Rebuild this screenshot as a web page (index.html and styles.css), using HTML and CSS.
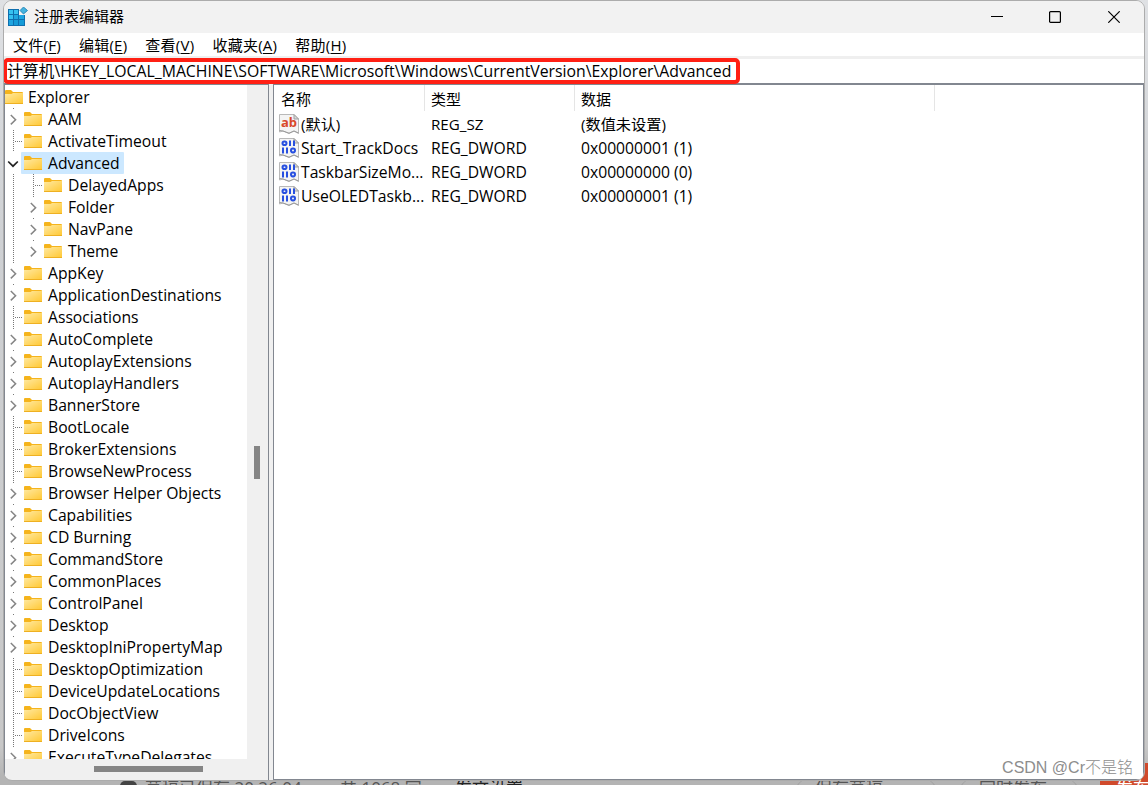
FILE: index.html
```
<!DOCTYPE html>
<html lang="zh-CN">
<head>
  <meta charset="UTF-8">
  <meta name="viewport" content="width=device-width, initial-scale=1.0">
  <title>注册表编辑器</title>
  <link rel="stylesheet" href="styles.css">
</head>
<body>

  <svg width="0" height="0" class="defs">
    <defs>
      <linearGradient id="folderFill" x1="0" y1="0" x2="1" y2="1">
        <stop offset="0" stop-color="#ffe9a2" />
        <stop offset="1" stop-color="#ffc937" />
      </linearGradient>
      <symbol id="folder" viewBox="0 0 18 14">
        <path d="M0 1.2Q0 0 1 0H6L8 2H17Q18 2 18 3V13H0Z" fill="#f5b41c" />
        <path d="M0 4H6.5L8 3H18V13H0Z" fill="url(#folderFill)" />
        <path d="M0 13.5H18" stroke="#eeb022" />
      </symbol>
      <symbol id="page" viewBox="0 0 20 20">
        <path d="M.5 .5H15L19.5 5V19.5L15 17L10 19.5L4 17L.5 18Z" fill="#f4f4f4" stroke="#b9b9b9" />
        <path d="M15 .5V5H19.5Z" fill="#d9d9d9" stroke="#a0a0a0" />
        <path d="M.5 16.5L4 17L10 19.2L15 17L19.5 19" fill="none" stroke="#999" />
      </symbol>
      <symbol id="binary" viewBox="0 0 20 20">
        <use href="#page" />
        <g fill="none" stroke="#2850e0" stroke-width="2">
          <rect x="3.5" y="3.5" width="4" height="3.6" rx="1.8" />
          <path d="M11 2.5V8M15 2.5V8M4 9.5V15.5M8 9.5V15.5" />
          <rect x="12" y="10.6" width="4" height="3.8" rx="1.8" />
        </g>
      </symbol>
    </defs>
  </svg>

  <div class="behind">
    <span class="save-dot"></span>
    <span class="saved">草稿已保存 20:26:04</span>
    <span class="count">共 1068 字</span>
    <span class="settings">发文设置</span>
    <span class="pill draft">保存草稿</span>
    <span class="pill timer">定时发布</span>
    <span class="publish">发布</span>
  </div>
  <div class="publish-edge"></div>

  <div class="window">
    <header class="titlebar">
      <svg class="app-icon" width="20" height="20" viewBox="0 0 20 20">
        <path d="M0 2H11V8H17V19H0Z" fill="#0f6fae" />
        <g fill="#35c1f1">
          <path d="M1 3H5V7H1ZM6 3H10V7H6ZM1 8H5V12H1Z" />
          <path d="M6 8H10V12H6ZM11 8H16V12H11ZM1 13H5V18H1Z" fill="#1fa5e0" />
          <path d="M6 13H10V18H6ZM11 13H16V18H11Z" fill="#149bd7" />
        </g>
        <path d="M15.5 0L19.5 3.5L15.5 7L12 3.5Z" fill="#45b3df" stroke="#1779ad" stroke-width=".8" />
      </svg>
      <h1>注册表编辑器</h1>
      <div class="controls">
        <svg width="12" height="12"><path d="M0 5.5H12" stroke="#000" /></svg>
        <svg width="12" height="12"><rect x=".6" y=".6" width="10.8" height="10.8" rx="1" fill="none" stroke="#000" stroke-width="1.2" /></svg>
        <svg width="12" height="12"><path d="M.3 .3L11.7 11.7M11.7 .3L.3 11.7" stroke="#000" stroke-width="1.2" /></svg>
      </div>
    </header>

    <nav class="menu">
      <span>文件(<u>F</u>)</span>
      <span>编辑(<u>E</u>)</span>
      <span>查看(<u>V</u>)</span>
      <span>收藏夹(<u>A</u>)</span>
      <span>帮助(<u>H</u>)</span>
    </nav>

    <div class="address">
      <div class="path">计算机\HKEY_LOCAL_MACHINE\SOFTWARE\Microsoft\Windows\CurrentVersion\Explorer\Advanced</div>
    </div>

    <main>
      <section class="tree-pane">
        <ul class="tree"></ul>
        <div class="scroll-y"><div class="thumb"></div></div>
        <div class="scroll-x"><div class="thumb"></div></div>
      </section>

      <section class="values">
        <div class="row head"><span>名称</span><span>类型</span><span>数据</span></div>
        <div class="row default">
          <span class="name">
            <svg width="20" height="20"><use href="#page" /><text x="2" y="13" class="ab">ab</text></svg>(默认)
          </span>
          <span>REG_SZ</span><span>(数值未设置)</span>
        </div>
        <div class="row">
          <span class="name"><svg width="20" height="20"><use href="#binary" /></svg>Start_TrackDocs</span>
          <span>REG_DWORD</span><span>0x00000001 (1)</span>
        </div>
        <div class="row">
          <span class="name"><svg width="20" height="20"><use href="#binary" /></svg>TaskbarSizeMo...</span>
          <span>REG_DWORD</span><span>0x00000000 (0)</span>
        </div>
        <div class="row">
          <span class="name"><svg width="20" height="20"><use href="#binary" /></svg>UseOLEDTaskb...</span>
          <span>REG_DWORD</span><span>0x00000001 (1)</span>
        </div>
      </section>
    </main>
  </div>

  <div class="watermark">CSDN @Cr不是铭</div>

  <script src="script.js"></script>
</body>
</html>
```
FILE: styles.css
```
* {
  box-sizing: border-box;
}
body {
  margin: 0;
  width: 1148px;
  height: 785px;
  overflow: hidden;
  position: relative;
  background: linear-gradient(#dfe1e4, #cfd1d4 30%, #c8c8c8 95%, #b4b4b4 99%);
  color: #000;
  font-family: "Open Sans", "Noto Sans CJK SC", sans-serif;
  font-size: 15px;
}
.defs {
  position: absolute;
}

/* page behind the window */
.behind {
  position: absolute;
  top: 778px;
  left: 0;
  width: 1148px;
  height: 7px;
  overflow: hidden;
  background: #b4b4b4;
  color: #555;
  font-size: 17px;
  line-height: 20px;
}
.behind span {
  position: absolute;
  top: 0;
  white-space: nowrap;
}
.behind .save-dot {
  left: 120px;
  top: 3px;
  width: 17px;
  height: 16px;
  border-radius: 5px;
  background: #444;
}
.behind .saved { left: 145px; }
.behind .count { left: 340px; }
.behind .settings { left: 455px; color: #222; }
.behind .pill {
  height: 34px;
  border: 1px solid #999;
  border-top: 0;
  border-radius: 17px;
  padding: 0 20px;
}
.behind .draft { left: 794px; width: 144px; }
.behind .timer { left: 958px; width: 122px; }
.behind .publish {
  left: 1100px;
  width: 48px;
  padding-left: 16px;
  background: #d04a2c;
  color: #fff;
}
.publish-edge {
  position: absolute;
  left: 1130px;
  top: 763px;
  width: 18px;
  height: 16px;
  background: #d04a2c;
}

.window {
  position: relative;
  display: flex;
  flex-direction: column;
  width: 1142px;
  height: 781px;
  margin-left: 3px;
  border: 1px solid #acacac;
  border-radius: 9px;
  background: #f0f0f0;
  overflow: hidden;
}
.titlebar {
  display: flex;
  align-items: center;
  flex: none;
  height: 32px;
  padding-left: 4px;
  background: #f2f2f2;
}
.titlebar h1 {
  margin: 0 0 3px 6px;
  font-size: 15px;
  font-weight: normal;
  line-height: 20px;
}
.controls {
  display: flex;
  gap: 46px;
  margin-left: auto;
  padding-right: 24px;
}
.controls svg:last-child {
  margin-left: 1px;
}
.controls svg,
.app-icon {
  display: block;
}

.menu {
  display: flex;
  flex: none;
  gap: 18px;
  height: 23px;
  padding-left: 9px;
  background: #fff;
  line-height: 25px;
  letter-spacing: 0.25px;
}
.menu u {
  text-underline-offset: 2px;
}

.address {
  flex: none;
  height: 27px;
  border-top: 3px solid #efefef;
  background: #fff;
}
.path {
  position: relative;
  top: -1px;
  width: 737px;
  height: 26px;
  margin-left: -1px;
  border: 4px solid #ff2014;
  border-radius: 5px;
  background: #fff;
  font-size: 15.8px;
  line-height: 18px;
  white-space: nowrap;
  overflow: hidden;
}

main {
  display: flex;
  flex: 1;
  gap: 4px;
  min-height: 0;
}
.tree-pane {
  display: grid;
  grid-template: 674px 20px / 242px 21px;
  width: 265px;
  border: 1px solid #828790;
  border-top-width: 2px;
  border-bottom: 0;
}
.tree {
  margin: 0;
  padding: 1px 0 0;
  list-style: none;
  overflow: hidden;
  background: #fff;
  font-size: 15.7px;
}
.tree li {
  display: flex;
  align-items: center;
  height: 22px;
}
.tree .cell {
  flex: none;
  width: 20px;
  height: 22px;
}
.tree .cell svg {
  display: block;
}
.tree .label {
  display: flex;
  align-items: center;
  gap: 6px;
  height: 22px;
  margin-left: -4px;
  padding: 0 4px 0 3px;
  line-height: 21px;
  white-space: nowrap;
}
.tree .label svg {
  flex: none;
}
.tree .selected .label {
  background: #cce8ff;
  border-radius: 1px;
}
.tree .root .label {
  gap: 5px;
  margin-left: 0;
  padding-left: 0;
}
.scroll-y .thumb {
  width: 6px;
  height: 33px;
  margin: 361px 0 0 7px;
  background: #858585;
}
.scroll-x {
  grid-column: 1 / 3;
}
.scroll-x .thumb {
  width: 109px;
  height: 6px;
  margin: 7px 0 0 89px;
  background: #858585;
}

.values {
  flex: 1;
  border: 1px solid #828790;
  border-top-width: 2px;
  background: #fff;
}
.row {
  display: grid;
  grid-template-columns: 151px 150px 360px;
  height: 24px;
  font-size: 15.7px;
  line-height: 24px;
}
.row span {
  padding-left: 6px;
  white-space: nowrap;
}
.row .name {
  display: flex;
  align-items: center;
  gap: 2px;
  padding-left: 5px;
}
.row.default {
  font-size: 15.2px;
}
.row.head {
  height: 27px;
  font-size: 15px;
  line-height: 29px;
}
.head span {
  height: 26px;
  border-right: 1px solid #e5e5e5;
}
.head span:first-child {
  padding-left: 7px;
}
.ab {
  fill: #d9482b;
  font: bold 13px "Open Sans", sans-serif;
}

.watermark {
  position: absolute;
  right: 15px;
  top: 757px;
  color: #8d8d8d;
  font-family: "Liberation Sans", "Noto Sans CJK SC", sans-serif;
  font-size: 16px;
  line-height: 22px;
  font-weight: 300;
}
```
FILE: script.js
```
// level, state (+ closed, - open, blank for a leaf), name
const keys = [
  [0, '', 'Explorer'],
  [1, '+', 'AAM'],
  [1, '', 'ActivateTimeout'],
  [1, '-', 'Advanced'],
  [2, '', 'DelayedApps'],
  [2, '+', 'Folder'],
  [2, '+', 'NavPane'],
  [2, '+', 'Theme'],
  [1, '+', 'AppKey'],
  [1, '+', 'ApplicationDestinations'],
  [1, '', 'Associations'],
  [1, '+', 'AutoComplete'],
  [1, '+', 'AutoplayExtensions'],
  [1, '+', 'AutoplayHandlers'],
  [1, '+', 'BannerStore'],
  [1, '', 'BootLocale'],
  [1, '', 'BrokerExtensions'],
  [1, '', 'BrowseNewProcess'],
  [1, '+', 'Browser Helper Objects'],
  [1, '+', 'Capabilities'],
  [1, '+', 'CD Burning'],
  [1, '+', 'CommandStore'],
  [1, '+', 'CommonPlaces'],
  [1, '+', 'ControlPanel'],
  [1, '+', 'Desktop'],
  [1, '+', 'DesktopIniPropertyMap'],
  [1, '', 'DesktopOptimization'],
  [1, '', 'DeviceUpdateLocations'],
  [1, '', 'DocObjectView'],
  [1, '', 'DriveIcons'],
  [1, '+', 'ExecuteTypeDelegates']
];

const marks = {
  '+': '<path d="M5.8 7L10.6 11.7L5.8 16.4" fill="none" stroke="#858585" stroke-width="1.5"/><path d="M8.5 0V1" stroke="#777"/>',
  '-': '<path d="M3.2 9.5L8 14.2L12.8 9.5" fill="none" stroke="#222" stroke-width="1.7"/>',
  '': '<path d="M8.5 0V22M10 11.5H17" stroke="#777" stroke-dasharray="1 1"/>',
  'line': '<path d="M8.5 0V22" stroke="#777" stroke-dasharray="1 1"/>'
};

const cell = mark => '<span class="cell"><svg width="20" height="22">' + marks[mark] + '</svg></span>';

document.querySelector('.tree').innerHTML = keys.map(function([level, state, name]) {
  const cls = name === 'Advanced' ? 'selected' : level === 0 ? 'root' : '';
  const lines = (level === 2 ? cell('line') : '') + (level ? cell(state) : '');
  return `<li class="${cls}">${lines}<span class="label">` +
    `<svg width="18" height="14"><use href="#folder"/></svg>${name}</span></li>`;
}).join('');
```
